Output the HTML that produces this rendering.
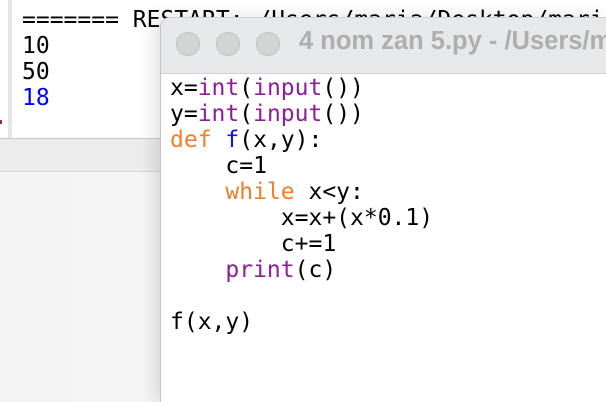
<!DOCTYPE html>
<html style="overflow:hidden;width:606px;height:402px"><head><style>
body{margin:0;width:606px;height:402px;overflow:hidden;position:relative;background:#fff;font-family:"DejaVu Sans Mono","Liberation Mono",monospace;}
.mono{font-family:"DejaVu Sans Mono","Liberation Mono",monospace;font-size:23px;line-height:26px;white-space:pre;position:absolute;}
#bgtop{position:absolute;left:0;top:0;width:606px;height:138px;background:#fff;}
#gutter{position:absolute;left:8px;top:0;width:4px;height:138px;background:#e6e6e6;}
#red{position:absolute;left:0;top:120px;width:2px;height:4px;background:#a03030;}
#bar{position:absolute;left:0;top:138px;width:606px;height:34px;background:#ececec;border-top:1px solid #c8c8c8;border-bottom:1px solid #d8d8d8;box-sizing:border-box;}
#below{position:absolute;left:0;top:172px;width:606px;height:230px;background:linear-gradient(to right,#f4f4f4,#f7f7f7 60%,#fff 100%);}
#win{position:absolute;left:160px;top:17px;width:446px;height:385px;background:#fff;border-left:1px solid #c4c4c4;border-top:1px solid #d0d0d0;border-top-left-radius:10px;box-shadow:-6px 0 18px rgba(0,0,0,0.12);overflow:hidden;}
#title{position:absolute;left:0;top:0;width:100%;height:55px;background:#e7e8e9;border-bottom:1px solid #d2d2d2;}
.dot{position:absolute;top:14px;width:22px;height:22px;border-radius:50%;background:#d3d4d4;border:1px solid #c2c2c2;}
#ttext{position:absolute;left:138px;top:9px;font-family:"Liberation Sans",sans-serif;font-weight:bold;font-size:25.5px;color:#aeaeae;white-space:nowrap;}
.p{color:#8a1f96}.o{color:#ef7f2a}.b{color:#1010f0}
</style></head><body>
<div id="bgtop"></div>
<div id="gutter"></div>
<div id="red"></div>
<div class="mono" style="left:22px;top:7px;color:#000">======= RESTART: /Users/maria/Desktop/maria
10
50
<span style="color:#0000f0">18</span></div>
<div id="bar"></div>
<div id="below"></div>
<div id="win">
<div id="title">
<div class="dot" style="left:15px"></div>
<div class="dot" style="left:55px"></div>
<div class="dot" style="left:95px"></div>
<div id="ttext">4 nom zan 5.py - /Users/maria</div>
</div>
<div class="mono" style="left:9px;top:57px;color:#000">x=<span class="p">int</span>(<span class="p">input</span>())
y=<span class="p">int</span>(<span class="p">input</span>())
<span class="o">def</span> <span class="b">f</span>(x,y):
    c=1
    <span class="o">while</span> x&lt;y:
        x=x+(x*0.1)
        c+=1
    <span class="p">print</span>(c)

f(x,y)</div>
</div>
</body></html>
